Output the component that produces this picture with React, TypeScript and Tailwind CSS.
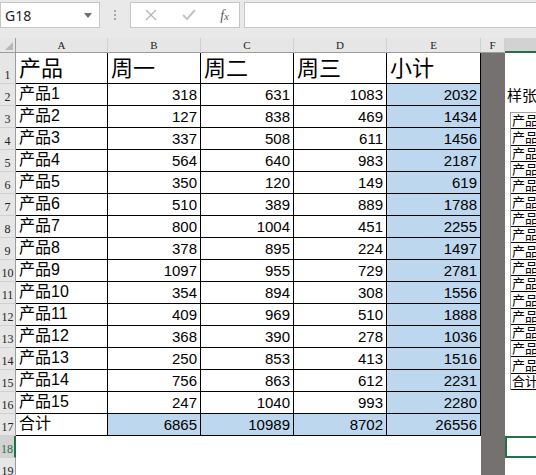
import React from 'react'

const rows: [string, number, number, number, number][] = [
  ['产品1', 318, 631, 1083, 2032],
  ['产品2', 127, 838, 469, 1434],
  ['产品3', 337, 508, 611, 1456],
  ['产品4', 564, 640, 983, 2187],
  ['产品5', 350, 120, 149, 619],
  ['产品6', 510, 389, 889, 1788],
  ['产品7', 800, 1004, 451, 2255],
  ['产品8', 378, 895, 224, 1497],
  ['产品9', 1097, 955, 729, 2781],
  ['产品10', 354, 894, 308, 1556],
  ['产品11', 409, 969, 510, 1888],
  ['产品12', 368, 390, 278, 1036],
  ['产品13', 250, 853, 413, 1516],
  ['产品14', 756, 863, 612, 2231],
  ['产品15', 247, 1040, 993, 2280],
]

const total: [string, number, number, number, number] = ['合计', 6865, 10989, 8702, 26556]

const grid = 'grid grid-cols-[16px_92px_93px_93px_93px_94px_24px_120px]'
const rowHead = 'flex items-end justify-center bg-[#e6e6e6] border-r border-b border-r-[#9c9c9c] border-b-[#d0d0d0] text-[12px] leading-[16px] text-[#222] font-["Liberation_Serif",serif]'
const cell = 'flex items-end px-[3px] pb-[1px] border-r border-b border-black overflow-hidden whitespace-nowrap'

function FormulaBar() {
  return (
    <div className="h-[38px] bg-[#e9e9e9] flex items-start pt-[2px] gap-0">
      <div className="w-[100px] h-[26px] bg-white border border-[#c6c6c6] flex items-center justify-between pl-[4px] pr-[7px]">
        <span className="text-[14px] text-[#222] font-['Noto_Sans',sans-serif]">G18</span>
        <svg width="8" height="5" viewBox="0 0 8 5"><path d="M0 0h8L4 5z" fill="#6e6e6e" /></svg>
      </div>
      <div className="w-[30px] h-[26px] flex flex-col items-center justify-center gap-[2px]">
        <span className="w-[2px] h-[2px] bg-[#a8a8a8]" />
        <span className="w-[2px] h-[2px] bg-[#a8a8a8]" />
        <span className="w-[2px] h-[2px] bg-[#a8a8a8]" />
      </div>
      <div className="w-[110px] h-[26px] bg-white border border-[#c6c6c6] flex items-center pl-[14px] pr-[10px] justify-between">
        <svg width="12" height="12" viewBox="0 0 12 12"><path d="M1 1l10 10M11 1L1 11" stroke="#b4b4b4" strokeWidth="1.3" /></svg>
        <svg width="14" height="12" viewBox="0 0 14 12"><path d="M1 6l4 4 8-9" stroke="#c4c4c4" strokeWidth="2" fill="none" /></svg>
        <span className="text-[14px] italic text-[#5a5a5a] font-['Liberation_Serif',serif]">f<span className="text-[11px]">x</span></span>
      </div>
      <div className="ml-[4px] flex-1 h-[26px] bg-white border border-[#c6c6c6] border-r-0" />
    </div>
  )
}

function ColHeaders() {
  const letters = ['A', 'B', 'C', 'D', 'E', 'F']
  return (
    <div className={`${grid} h-[15px]`}>
      <div className="bg-[#e6e6e6] border-r border-b border-r-[#9c9c9c] border-b-[#9c9c9c] flex items-end justify-end pr-[2px] pb-[2px]">
        <svg width="8" height="8" viewBox="0 0 8 8"><path d="M8 0v8H0z" fill="#b8b8b8" /></svg>
      </div>
      {letters.map(l => (
        <div key={l} className="bg-[#e6e6e6] border-r border-b border-r-[#d0d0d0] border-b-[#9c9c9c] flex items-center justify-center text-[11px] leading-none text-[#222] font-['Liberation_Serif',serif]">
          {l}
        </div>
      ))}
      <div className="bg-[#d2d2d2] border-b-2 border-b-[#217346]" />
    </div>
  )
}

function DataRow({ n, r, blueAll }: { n: number; r: [string, number, number, number, number]; blueAll?: boolean }) {
  const nums = [r[1], r[2], r[3], r[4]]
  return (
    <div className={`${grid} h-[22px]`}>
      <div className={rowHead}>{n}</div>
      <div className={`${cell} border-l-0 text-[16px] leading-[20px]`}>{r[0]}</div>
      {nums.map((v, i) => (
        <div
          key={i}
          className={`${cell} justify-end text-[15px] leading-[19px] ${blueAll || i === 3 ? 'bg-[#bdd7ee]' : ''}`}
        >
          {v}
        </div>
      ))}
      <div className="bg-[#767171]" />
      <div className="flex items-end pl-[2px] pb-[1px] text-[15px] leading-[19px] whitespace-nowrap">
        {n === 2 ? '样张' : ''}
      </div>
    </div>
  )
}

function MiniPicture() {
  const items = ['产品', ...rows.map(r => r[0]), '合计']
  return (
    <div className="absolute left-[510px] top-[112px] w-[120px] border-l border-t border-[#a0a0a0] bg-white">
      {items.map((t, i) => (
        <div key={i} className="h-[16.3px] border-b border-black flex items-end pl-[1px] text-[13px] leading-[15px] whitespace-nowrap">
          {t}
        </div>
      ))}
    </div>
  )
}

export default function App() {
  return (
    <div className="w-[536px] h-[475px] overflow-hidden bg-white relative font-['Liberation_Sans','Noto_Sans_CJK_SC',sans-serif] text-black">
      <FormulaBar />
      <ColHeaders />

      {/* row 1: headers */}
      <div className={`${grid} h-[31px]`}>
        <div className={rowHead}>1</div>
        {['产品', '周一', '周二', '周三', '小计'].map(t => (
          <div key={t} className={`${cell} text-[22px] leading-[26px] pb-0`}>{t}</div>
        ))}
        <div className="bg-[#767171]" />
        <div />
      </div>

      {rows.map((r, i) => (
        <DataRow key={i} n={i + 2} r={r} />
      ))}
      <DataRow n={17} r={total} blueAll />

      {/* row 18: selected */}
      <div className={`${grid} h-[22px]`}>
        <div className="flex items-end justify-center bg-[#d2d2d2] border-r-2 border-b border-r-[#217346] border-b-[#d0d0d0] text-[12px] leading-[16px] text-[#217346] font-['Liberation_Serif',serif]">18</div>
        <div /><div /><div /><div /><div />
        <div className="bg-[#767171]" />
        <div className="border-2 border-[#217346]" />
      </div>

      <div className={`${grid} h-[22px]`}>
        <div className={rowHead}>19</div>
        <div /><div /><div /><div /><div />
        <div className="bg-[#767171]" />
        <div />
      </div>

      <MiniPicture />
    </div>
  )
}
